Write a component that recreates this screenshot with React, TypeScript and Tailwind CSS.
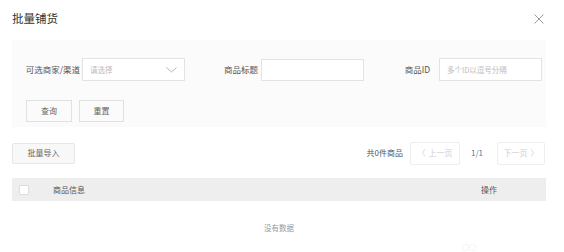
import React from "react";

const font = { fontFamily: '"Noto Sans CJK SC", "Noto Sans", sans-serif' };

function Chevron() {
  return (
    <svg width="11" height="6" viewBox="0 0 11 6" fill="none">
      <polyline points="0.5,0.5 5.5,5 10.5,0.5" stroke="#b5b5b5" strokeWidth="1" />
    </svg>
  );
}

function CloseX() {
  return (
    <svg width="10" height="10" viewBox="0 0 10 10" fill="none">
      <line x1="0.5" y1="0.5" x2="9.5" y2="9.5" stroke="#9a9a9a" strokeWidth="1" />
      <line x1="9.5" y1="0.5" x2="0.5" y2="9.5" stroke="#9a9a9a" strokeWidth="1" />
    </svg>
  );
}

export default function App() {
  return (
    <div
      className="w-[564px] h-[252px] bg-white overflow-hidden relative pl-[12px] pr-[18px] text-[#444]"
      style={font}
    >
      {/* header */}
      <div className="flex items-center justify-between h-[40px] pb-[2px]">
        <span className="text-[11.5px] text-[#333] leading-none">批量铺货</span>
        <span className="mr-[2px] flex">
          <CloseX />
        </span>
      </div>

      {/* filter panel */}
      <div className="bg-[#fbfbfb] pt-[18px] pb-[5px]">
        <div className="flex items-center h-[23px] pl-[13px]">
          <div className="w-[57px] pr-[2px] text-right text-[8.5px] leading-none text-[#555] whitespace-nowrap">
            可选商家/渠道
          </div>
          <div className="w-[103px] h-[23px] bg-white border border-[#e3e3e3] flex items-center justify-between pl-[7px] pr-[7px]">
            <span className="text-[7.5px] text-[#bbb] leading-none">请选择</span>
            <Chevron />
          </div>
          <div className="w-[76px] pr-[3px] text-right text-[8.5px] leading-none text-[#555] whitespace-nowrap">
            商品标题
          </div>
          <div className="w-[103px] h-[22px] bg-white border border-[#e3e3e3]" />
          <div className="w-[75px] pr-[9px] text-right text-[8.5px] leading-none text-[#555] whitespace-nowrap">
            商品ID
          </div>
          <div className="w-[103px] h-[23px] bg-white border border-[#e3e3e3] flex items-center pl-[7px]">
            <span className="text-[7.5px] text-[#bbb] leading-none whitespace-nowrap">多个ID以逗号分隔</span>
          </div>
        </div>
        <div className="flex items-center gap-[7px] pl-[14px] mt-[19px]">
          <div className="w-[46px] h-[22px] border border-[#e1e1e1] bg-[#fbfbfb] flex items-center justify-center text-[8px] text-[#666] leading-none">
            查询
          </div>
          <div className="w-[45px] h-[22px] border border-[#e1e1e1] bg-[#fbfbfb] flex items-center justify-center text-[8px] text-[#666] leading-none">
            重置
          </div>
        </div>
      </div>

      {/* toolbar */}
      <div className="flex items-center justify-between mt-[15px] h-[22px] pr-[1px]">
        <div className="w-[63px] h-[21px] rounded-[2px] border border-[#e6e6e6] bg-[#f8f8f8] flex items-center justify-center text-[8px] text-[#666] leading-none">
          批量导入
        </div>
        <div className="flex items-center">
          <span className="text-[8px] text-[#555] leading-none mr-[7px]">共0件商品</span>
          <div className="w-[50px] h-[23px] border border-[#eeeeee] rounded-[2px] flex items-center justify-center text-[8px] text-[#cfcfcf] leading-none gap-[3px]">
            <span>〈</span>
            <span>上一页</span>
          </div>
          <span className="ml-[11px] mr-[14px] text-[8px] text-[#5f74a8] leading-none">1/1</span>
          <div className="w-[48px] h-[23px] border border-[#eeeeee] rounded-[2px] flex items-center justify-center text-[8px] text-[#cfcfcf] leading-none gap-[3px]">
            <span>下一页</span>
            <span>〉</span>
          </div>
        </div>
      </div>

      {/* table header */}
      <div className="mt-[14px] h-[23px] bg-[#eeeeee] flex items-center pl-[7px] pr-[49px]">
        <div className="w-[10px] h-[10px] bg-white border border-[#dcdcdc] rounded-[1px]" />
        <span className="ml-[24px] text-[8px] text-[#555] leading-none">商品信息</span>
        <span className="ml-auto text-[8px] text-[#555] leading-none">操作</span>
      </div>

      {/* empty */}
      <div className="h-[54px] flex items-center justify-center">
        <span className="text-[7.5px] text-[#999] leading-none">没有数据</span>
      </div>

      <div className="absolute left-[462px] top-[244px] text-[7px] text-[#e6e6e6] leading-none">
        ○○
      </div>
    </div>
  );
}
